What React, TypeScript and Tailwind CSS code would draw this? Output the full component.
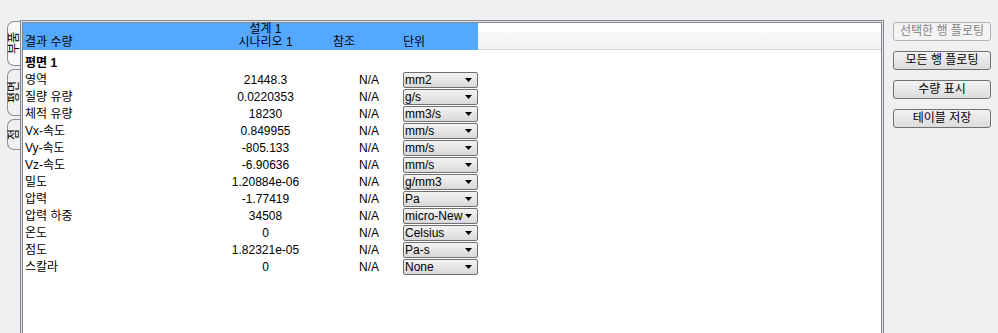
import React from 'react';

type Row = { label: string; value: string; unit: string };

const rows: Row[] = [
  { label: '영역', value: '21448.3', unit: 'mm2' },
  { label: '질량 유량', value: '0.0220353', unit: 'g/s' },
  { label: '체적 유량', value: '18230', unit: 'mm3/s' },
  { label: 'Vx-속도', value: '0.849955', unit: 'mm/s' },
  { label: 'Vy-속도', value: '-805.133', unit: 'mm/s' },
  { label: 'Vz-속도', value: '-6.90636', unit: 'mm/s' },
  { label: '밀도', value: '1.20884e-06', unit: 'g/mm3' },
  { label: '압력', value: '-1.77419', unit: 'Pa' },
  { label: '압력 하중', value: '34508', unit: 'micro-Newton' },
  { label: '온도', value: '0', unit: 'Celsius' },
  { label: '점도', value: '1.82321e-05', unit: 'Pa-s' },
  { label: '스칼라', value: '0', unit: 'None' },
];

const font = { fontFamily: '"Liberation Sans", "Noto Sans CJK KR", sans-serif' };

const UnitSelect: React.FC<{ unit: string }> = ({ unit }) => (
  <div className="ml-[24px] w-[75px] h-[16px] rounded-[2px] border border-[#707070] bg-gradient-to-b from-[#f3f3f3] to-[#d9d9d9] flex items-center justify-between pl-px pr-[5px]">
    <span className="w-[58px] overflow-hidden whitespace-nowrap leading-[14px]">{unit}</span>
    <svg width="7" height="4" viewBox="0 0 7 4">
      <path d="M0 0 L7 0 L3.5 4 Z" fill="#000" />
    </svg>
  </div>
);

const SideTab: React.FC<{ text: string; h: string; selected?: boolean }> = ({ text, h, selected }) => (
  <div
    className={`${h} w-[14px] border border-r-0 border-[#8a8f99] rounded-l-[7px] flex items-center justify-center ${
      selected ? 'bg-[#f7f7f7]' : 'bg-[#f0f0f0]'
    }`}
  >
    <span className="[writing-mode:vertical-rl] [text-orientation:sideways] rotate-180 leading-[13px]">{text}</span>
  </div>
);

const ActionButton: React.FC<{ label: string; disabled?: boolean }> = ({ label, disabled }) => (
  <button
    className={`w-[98px] h-[19px] rounded-[3px] border text-[12px] leading-[17px] ${
      disabled
        ? 'border-[#adb2b5] bg-[#f4f4f4] text-[#838383]'
        : 'border-[#707070] bg-gradient-to-b from-[#f2f2f2] to-[#dcdcdc] text-black'
    }`}
  >
    {label}
  </button>
);

export default function App() {
  return (
    <div className="w-[998px] h-[333px] overflow-hidden bg-[#f0f0f0] flex text-[12px] text-black" style={font}>
      <div className="w-[20px] pt-[21px] pl-[7px] flex flex-col gap-[3px]">
        <SideTab text="부품" h="h-[45px]" selected />
        <SideTab text="평면" h="h-[47px]" />
        <SideTab text="점" h="h-[31px]" />
      </div>

      <div className="mt-[20px] w-[864px] h-[330px] border border-[#828790] p-px bg-[#e3e3e3]">
        <div className="h-full border border-[#828790] bg-white">
          <div className="flex h-[27px]">
            <div className="w-[455px] bg-[#55a8ff] flex">
              <div className="w-[180px] pl-[2px] flex items-end leading-[13px] pb-px">결과 수량</div>
              <div className="w-[125px] flex flex-col justify-end items-center leading-[13px] pb-px">
                <span>설계 1</span>
                <span>시나리오 1</span>
              </div>
              <div className="w-[51px] pl-[5px] flex items-end leading-[13px] pb-px">참조</div>
              <div className="ml-[24px] flex items-end leading-[13px] pb-px">단위</div>
            </div>
            <div className="flex-1 pt-[9px]">
              <div className="h-[18px] bg-gradient-to-b from-[#f7f8f9] to-[#f1f2f4] border-b border-[#d5d5d5]" />
            </div>
          </div>

          <div className="mt-[4px] flex flex-col">
            <div className="h-[17px] pl-[2px] flex items-center font-bold">평면 1</div>
            {rows.map((r) => (
              <div key={r.label} className="h-[17px] flex items-center">
                <div className="w-[180px] pl-[2px] whitespace-nowrap">{r.label}</div>
                <div className="w-[125px] text-center">{r.value}</div>
                <div className="w-[51px] text-right">N/A</div>
                <UnitSelect unit={r.unit} />
              </div>
            ))}
          </div>
        </div>
      </div>

      <div className="pl-[9px] pt-[22px] flex flex-col gap-[10px]">
        <ActionButton label="선택한 행 플로팅" disabled />
        <ActionButton label="모든 행 플로팅" />
        <ActionButton label="수량 표시" />
        <ActionButton label="테이블 저장" />
      </div>
    </div>
  );
}
